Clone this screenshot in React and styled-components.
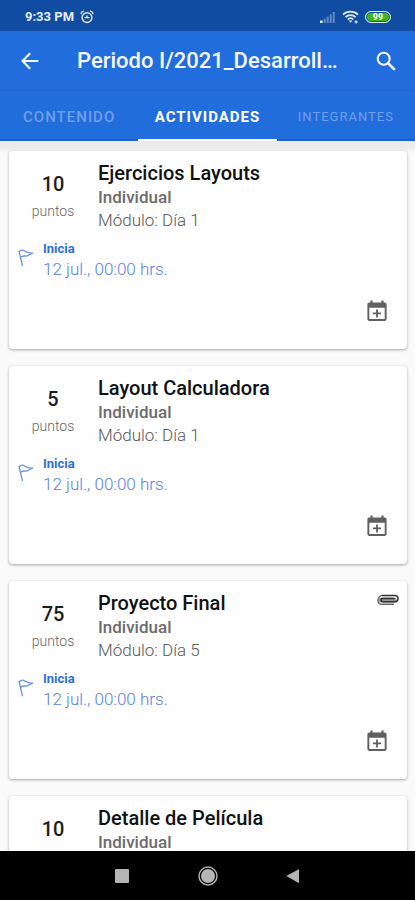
import React from "react";
import styled, { createGlobalStyle } from "styled-components";

const GlobalStyle = createGlobalStyle`
  *, *::before, *::after { box-sizing: border-box; }
  body { margin: 0; background: #fafafa; }
  body, button { font-family: Roboto, "Liberation Sans", sans-serif; }
  button { border: 0; padding: 0; background: none; color: inherit; cursor: pointer; }
  svg { display: block; }
`;

const Screen = styled.div`
  display: flex;
  flex-direction: column;
  height: 100vh;
`;

const StatusBar = styled.div`
  flex: none;
  display: flex;
  align-items: center;
  justify-content: space-between;
  height: 31px;
  padding: 3px 24px 0 25px;
  background: #104ca2;
  color: #e4ecfa;
`;

const StatusGroup = styled.div`
  display: flex;
  align-items: center;
  gap: 6px;
`;

const Clock = styled.span`
  font-size: 13px;
  font-weight: 700;
  line-height: 16px;
`;

const AppBar = styled.header`
  flex: none;
  display: flex;
  align-items: center;
  height: 60px;
  padding: 1px 17px 0 18px;
  background: #226ddc;
  border-bottom: 1px solid #1e65d0;
  color: #f4f8ff;
`;

const Title = styled.h1`
  flex: 1;
  min-width: 0;
  margin: 0 20px 0 35px;
  overflow: hidden;
  white-space: nowrap;
  font-size: 22px;
  font-weight: 500;
  line-height: 28px;
`;

const IconButton = styled.button`
  flex: none;
  display: grid;
  place-items: center;
  width: ${(p) => p.$size}px;
  height: ${(p) => p.$size}px;
`;

const Tabs = styled.nav`
  flex: none;
  display: grid;
  grid-template-columns: repeat(3, 1fr);
  height: 50px;
  background: #226ddc;
`;

const Tab = styled.button`
  padding-top: 3px;
  border-bottom: 2px solid ${(p) => (p.$active ? "#ffffff" : "#1c62cc")};
  color: ${(p) => (p.$active ? "#ffffff" : "#6d9fea")};
  font-size: ${(p) => (p.$small ? 13 : 15)}px;
  font-weight: ${(p) => (p.$small ? 400 : p.$active ? 700 : 500)};
  line-height: 20px;
  letter-spacing: 1px;
  text-transform: uppercase;
`;

const List = styled.main`
  flex: 1;
  min-height: 0;
  display: flex;
  flex-direction: column;
  gap: 17px;
  padding: 10px 8px 10px 9px;
  overflow-y: auto;
  scrollbar-width: none;
  background: linear-gradient(#ebebeb, #ebebeb 6px, #fafafa 12px);
`;

const Card = styled.article`
  flex: none;
  display: flex;
  flex-direction: column;
  min-height: 198px;
  padding: 9px 8px 24px;
  border-radius: 4px;
  background: #fefefe;
  box-shadow: 0 1px 3px rgba(0, 0, 0, 0.34);
`;

const Summary = styled.div`
  display: grid;
  grid-template-columns: 72px 1fr auto;
  column-gap: 9px;
`;

const Score = styled.div`
  padding-top: 11px;
  text-align: center;
`;

const Points = styled.div`
  color: #1d1d1d;
  font-size: 20px;
  font-weight: 500;
  line-height: 26px;
`;

const PointsLabel = styled.div`
  padding-top: 4px;
  color: #686868;
  font-size: 14px;
  font-weight: 300;
  line-height: 20px;
`;

const CardTitle = styled.h2`
  margin: 0;
  color: #111111;
  font-size: 20px;
  font-weight: 500;
  line-height: 26px;
`;

const Detail = styled.p`
  margin: 0;
  color: ${(p) => (p.$light ? "#5a5a5a" : "#6c6c6c")};
  font-size: 17px;
  font-weight: ${(p) => (p.$light ? 300 : 500)};
  line-height: 23px;
`;

const Start = styled.div`
  display: flex;
  align-items: flex-start;
  gap: 8px;
  padding-top: 8px;
`;

const StartLabel = styled.div`
  color: #2e6fdd;
  font-size: 13px;
  font-weight: 700;
  line-height: 18px;
`;

const StartDate = styled.time`
  display: block;
  color: #5b80ea;
  font-size: 17px;
  font-weight: 300;
  line-height: 23px;
`;

const FlagSlot = styled.div`
  padding-top: 8px;
`;

const CardActions = styled.div`
  display: flex;
  justify-content: flex-end;
  margin-top: auto;
  padding-right: 8px;
  color: #606060;
`;

const Attachment = styled.div`
  padding-top: 4px;
`;

const NavBar = styled.nav`
  flex: none;
  display: flex;
  align-items: center;
  justify-content: center;
  gap: 61px;
  height: 49px;
  background: #000000;
  color: #b5b5b5;
`;

const AlarmIcon = () => (
  <svg width="14" height="14" viewBox="0 0 14 14" fill="none" stroke="currentColor" strokeWidth="1.4" strokeLinecap="round">
    <circle cx="7" cy="7.6" r="4.9" />
    <path d="M1.1 3.6C1.3 2.2 2.3 1.3 3.6 1.1M12.9 3.6C12.7 2.2 11.7 1.3 10.4 1.1M5 7.6h4M7 6v1.6" />
  </svg>
);

const SignalIcon = () => (
  <svg width="17" height="13" viewBox="0 0 17 13" fill="currentColor">
    <rect x="1" y="9.5" width="2.6" height="2.5" />
    <g opacity=".38">
      <rect x="4.7" y="7.8" width="2" height="4.2" />
      <rect x="7.7" y="5.6" width="2" height="6.4" />
      <rect x="10.7" y="3.3" width="2" height="8.7" />
      <rect x="13.7" y="1" width="2" height="11" />
    </g>
  </svg>
);

const WifiIcon = () => (
  <svg width="17" height="14" viewBox="0 0 17 14" fill="none" stroke="currentColor" strokeWidth="1.7">
    <path d="M1 4.6C5 .6 12 .6 16 4.6M3.4 7.1c2.8-2.7 7.4-2.7 10.2 0M5.7 9.5c1.6-1.5 4-1.5 5.6 0" />
    <path d="M6.6 10.4h3.8L8.5 12.8z" fill="currentColor" stroke="none" />
    <path d="M12.6 11.9h3M14.1 10.4v3" strokeWidth="1.2" />
  </svg>
);

const Battery = styled.span`
  display: grid;
  place-items: center;
  width: 26px;
  height: 12px;
  border: 1px solid #e4ecfa;
  border-radius: 6px;
  background: #3db51f;
  box-shadow: inset 0 0 0 1px #104ca2;
  color: #ffffff;
  font-size: 9px;
  font-weight: 700;
  line-height: 10px;
`;

const BackIcon = () => (
  <svg width="18" height="18" viewBox="0 0 18 18" fill="none" stroke="currentColor" strokeWidth="2.1">
    <path d="M17.3 9H2M9.2 1.2L1.5 9l7.7 7.8" />
  </svg>
);

const SearchIcon = () => (
  <svg width="20" height="20" viewBox="0 0 20 20" fill="none" stroke="currentColor" strokeWidth="2.1">
    <circle cx="7.7" cy="7.7" r="6" />
    <path d="M12.1 12.1l6.7 6.7" strokeWidth="2.6" />
  </svg>
);

const FlagIcon = () => (
  <svg width="18" height="20" viewBox="0 0 18 20" fill="none" stroke="#6c91df" strokeWidth="1.3" strokeLinejoin="round" strokeLinecap="round">
    <path d="M5.4 17.6L2 3.4M2.4 3.7C4.2 1.7 6.4 2 8.1 3.2s3.2 2.2 7.5 1.9c-2.4.7-4 3-6.4 3S5.4 7.3 3.8 9.3" />
  </svg>
);

const CalendarIcon = () => (
  <svg width="20" height="22" viewBox="0 0 20 22" fill="currentColor">
    <path fillRule="evenodd" d="M3.4 0.5h2.2v2h8.8v-2h2.2v2h1c1.2 0 2 .8 2 2v14.6c0 1.1-.8 1.9-2 1.9H2.4c-1.2 0-2-.8-2-1.9V4.5c0-1.2.8-2 2-2h1zM2.3 7.7v11.4h15.4V7.7z" />
    <path d="M9.1 9.4h1.8v3.1H14v1.8h-3.1v3.1H9.1v-3.1H6v-1.8h3.1z" />
  </svg>
);

const ClipIcon = () => (
  <svg width="22" height="12" viewBox="0 0 22 12" fill="none" strokeLinecap="round">
    <path d="M4 6h13" stroke="#9a9a9a" strokeWidth="5" />
    <path d="M16.5 10.3H5.4C2.5 10.3.9 8.7.9 6.5S2.6 1.4 5.2 1.4" stroke="#6a6a6a" strokeWidth="1.4" />
    <path d="M5.2 1.4h12.3c2 0 3.5 1.3 3.5 3.2 0 1.8-1.4 3.2-3.3 3.2H6.1C4.8 7.8 4 7.1 4 6.1s.9-1.7 2-1.7h11.1" stroke="#303030" strokeWidth="1.5" />
  </svg>
);

const RecentsIcon = () => (
  <svg width="20" height="20" viewBox="0 0 20 20" fill="currentColor">
    <rect x="2" y="3" width="14" height="14" rx="1" />
  </svg>
);

const HomeIcon = () => (
  <svg width="20" height="20" viewBox="0 0 20 20" fill="currentColor">
    <circle cx="10" cy="10" r="7" />
    <circle cx="10" cy="10" r="9" fill="none" stroke="currentColor" strokeWidth="1.4" />
  </svg>
);

const NavBackIcon = () => (
  <svg width="20" height="20" viewBox="0 0 20 20" fill="currentColor">
    <path d="M16 3.8v12.6q0 .7-.7.4L4.1 10.6q-.8-.5 0-1L15.3 3.4q.7-.3.7.4z" />
  </svg>
);

const activities = [
  { title: "Ejercicios Layouts", points: 10, module: "Módulo: Día 1" },
  { title: "Layout Calculadora", points: 5, module: "Módulo: Día 1" },
  { title: "Proyecto Final", points: 75, module: "Módulo: Día 5", attachment: true },
  { title: "Detalle de Película", points: 10, module: "Módulo: Día 5" },
];

function Activity({ title, points, module, attachment }) {
  return (
    <Card>
      <Summary>
        <Score>
          <Points>{points}</Points>
          <PointsLabel>puntos</PointsLabel>
        </Score>
        <div>
          <CardTitle>{title}</CardTitle>
          <Detail>Individual</Detail>
          <Detail $light>{module}</Detail>
        </div>
        {attachment && (
          <Attachment>
            <ClipIcon />
          </Attachment>
        )}
      </Summary>
      <Start>
        <FlagSlot>
          <FlagIcon />
        </FlagSlot>
        <div>
          <StartLabel>Inicia</StartLabel>
          <StartDate>12 jul., 00:00 hrs.</StartDate>
        </div>
      </Start>
      <CardActions>
        <IconButton $size={28} aria-label="Agregar al calendario">
          <CalendarIcon />
        </IconButton>
      </CardActions>
    </Card>
  );
}

export default function App() {
  return (
    <Screen>
      <GlobalStyle />
      <StatusBar>
        <StatusGroup>
          <Clock>9:33 PM</Clock>
          <AlarmIcon />
        </StatusGroup>
        <StatusGroup>
          <SignalIcon />
          <WifiIcon />
          <Battery>99</Battery>
        </StatusGroup>
      </StatusBar>
      <AppBar>
        <IconButton $size={24} aria-label="Volver">
          <BackIcon />
        </IconButton>
        <Title>Periodo I/2021_Desarroll…</Title>
        <IconButton $size={24} aria-label="Buscar">
          <SearchIcon />
        </IconButton>
      </AppBar>
      <Tabs>
        <Tab>Contenido</Tab>
        <Tab $active aria-current="page">Actividades</Tab>
        <Tab $small>Integrantes</Tab>
      </Tabs>
      <List>
        {activities.map((activity) => (
          <Activity key={activity.title} {...activity} />
        ))}
      </List>
      <NavBar>
        <IconButton $size={24} aria-label="Recientes">
          <RecentsIcon />
        </IconButton>
        <IconButton $size={24} aria-label="Inicio">
          <HomeIcon />
        </IconButton>
        <IconButton $size={24} aria-label="Atrás">
          <NavBackIcon />
        </IconButton>
      </NavBar>
    </Screen>
  );
}
